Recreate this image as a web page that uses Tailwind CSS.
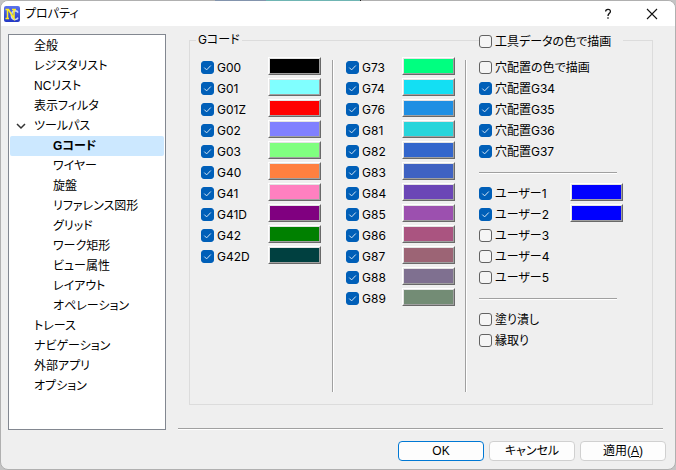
<!DOCTYPE html>
<html lang="ja">
<head>
<meta charset="utf-8">
<meta name="viewport" content="width=device-width, initial-scale=1">
<title>プロパティ</title>
<script src="https://cdn.jsdelivr.net/npm/@tailwindcss/browser@4"></script>
</head>
<body class="bg-[#c4c4c4] font-['Liberation_Sans','Noto_Sans_CJK_JP',sans-serif] text-[12px] leading-[20px] text-black [font-feature-settings:'palt']">
<div class="relative flex min-h-screen flex-col overflow-hidden rounded-lg border border-[#b0b0b0] bg-[#efefef]">
  <header class="flex h-[25px] shrink-0 items-center bg-white pl-[3px] pr-[11px]">
    <svg class="size-4 shrink-0" viewBox="0 0 16 16" aria-hidden="true">
      <defs><linearGradient id="logo" x1="0" y1="0" x2="0" y2="1"><stop offset="0" stop-color="#5b74ee"/><stop offset="1" stop-color="#2338c4"/></linearGradient></defs>
      <rect width="16" height="16" rx="2" fill="url(#logo)"/>
      <path d="M14 6.600C13 4 7.800 4 7.400 9c-.3 5.200 5.400 5.600 6.600 2.600" fill="none" stroke="#c4d0f7" stroke-width="1.600"/>
      <path d="M1.500 12.500h3.500M3.500 12.500V3.500M1.500 3.500h3l5.500 9V3.500M8 3.500h4" fill="none" stroke="#ffee20" stroke-width="1.500"/>
    </svg>
    <h1 class="ml-[5px] grow">プロパティ</h1>
    <button aria-label="ヘルプ" class="grid w-6 place-items-center"><svg class="h-3 w-2" viewBox="0 0 8 12" fill="none" stroke="#111" stroke-width="1.300" aria-hidden="true"><path d="M1.600 3.600C1.600.6 6.400.6 6.400 3.400 6.400 5.200 4 5.500 4 8"/><path d="M4 9.300v1.500"/></svg></button>
    <button aria-label="閉じる" class="ml-5 grid w-6 place-items-center"><svg class="size-3" viewBox="0 0 12 12" fill="none" stroke="#111" stroke-width="1.100" aria-hidden="true"><path d="M1 1l10 10M11 1L1 11"/></svg></button>
  </header>

  <main class="flex grow gap-3 pl-[7px] pr-[9px] pt-2">
    <nav aria-label="設定項目" class="w-[158px] shrink-0 self-stretch border border-[#828790] bg-white p-px">
      <ul id="tree"></ul>
    </nav>
    <div class="flex min-w-0 grow flex-col">
      <fieldset class="relative -mt-px mb-[23px] ml-[11px] mr-[13px] flex grow flex-col border border-[#dcdcdc] pb-3 pl-[11px] pr-[29px] pt-[10px] font-['Inter','Noto_Sans_CJK_JP',sans-serif]">
        <legend class="-ml-[5px] px-[2px] leading-[14px]">Gコード</legend>
        <div class="flex grow">
          <div id="col1" class="min-w-0 flex-[120]"></div>
          <div class="ml-[11px] mr-3 mt-[3px] w-[2px] border-l border-r border-l-[#a0a0a0] border-r-white"></div>
          <div id="col2" class="min-w-0 flex-[109]"></div>
          <div class="ml-[10px] mr-3 mt-[3px] w-[2px] border-l border-r border-l-[#a0a0a0] border-r-white"></div>
          <div id="col3" class="relative min-w-0 flex-[144]"></div>
        </div>
      </fieldset>
      <hr class="mr-[3px] h-[2px] border-b border-t border-b-white border-t-[#a0a0a0]">
    </div>
  </main>

  <footer class="flex justify-end gap-[5px] px-[9px] pb-2 pt-[11px] leading-[18px]">
    <button class="h-5 w-[86px] rounded border border-[#0078d4] bg-[#fdfdfd]">OK</button>
    <button class="h-5 w-[86px] rounded border border-[#d0d0d0] bg-[#fdfdfd]">キャンセル</button>
    <button class="h-5 w-[86px] rounded border border-[#d0d0d0] bg-[#fdfdfd]">適用(<u>A</u>)</button>
  </footer>
</div>
<div class="pointer-events-none absolute left-[215px] top-0 flex h-px w-[146px]" aria-hidden="true">
  <div class="w-[51px] bg-[#8394ad]"></div><div class="grow bg-[#6fb5b3]"></div><div class="w-px bg-[#222]"></div>
</div>

<script>
const tree = [
  ['全般'], ['レジスタリスト'], ['NCリスト'], ['表示フィルタ'],
  ['ツールパス', ['Gコード', 'ワイヤー', '旋盤', 'リファレンス図形', 'グリッド', 'ワーク矩形', 'ビュー属性', 'レイアウト', 'オペレーション']],
  ['トレース'], ['ナビゲーション'], ['外部アプリ'], ['オプション']
];
const chevron = '<svg class="ml-[6px] mr-[8px] h-2 w-[10px]" viewBox="0 0 10 8" fill="none" stroke="#333" stroke-width="1.500" aria-hidden="true"><path d="M1 2l4 4 4-4"/></svg>';
document.getElementById('tree').innerHTML = tree.map(([name, kids]) => kids
  ? `<li><button class="flex h-5 w-full items-center text-left" aria-expanded="true">${chevron}${name}</button><ul>${kids.map((k, i) =>
      `<li><button class="${i ? 'block h-5 w-full pl-[43px] text-left' : 'block h-5 w-full rounded-xs bg-[#cce8ff] pl-[43px] text-left font-bold'}">${k}</button></li>`).join('')}</ul></li>`
  : `<li><button class="block h-5 w-full pl-6 text-left">${name}</button></li>`).join('');

const row = ([name, checked, color]) => `
  <div class="flex h-[21px] items-start">
    <label class="flex h-[21px] grow items-center gap-[3px] whitespace-nowrap">
      <span class="grid size-[13px] shrink-0">
        <input type="checkbox" class="peer col-start-1 row-start-1 size-[13px] appearance-none rounded-[3px] border border-[#626262] bg-[#f5f5f5] checked:border-[#005fb8] checked:bg-[#005fb8]"${checked ? ' checked' : ''}>
        <svg class="pointer-events-none col-start-1 row-start-1 hidden size-[13px] peer-checked:block" viewBox="0 0 13 13" fill="none" stroke="#d5e6f5" aria-hidden="true"><path d="M3.300 6.600l2.300 2.300 4.200-4.400"/></svg>
      </span>${name}</label>
    ${color ? `<button aria-label="${name}の色" class="h-[18px] w-[53px] shrink-0 border border-b-[#696969] border-l-white border-r-[#696969] border-t-white"><span class="block h-4 border border-b-[#a0a0a0] border-l-[#e3e3e3] border-r-[#a0a0a0] border-t-[#e3e3e3]" style="background-color:${color}"></span></button>` : ''}
  </div>`;
const rule = '<div class="flex h-[21px] items-center"><hr class="mr-[6px] h-[2px] grow border-b border-t border-b-white border-t-[#a0a0a0]"></div>';
const fill = (id, items, before = '') => {
  document.getElementById(id).innerHTML = before + items.map(i => i ? row(i) : rule).join('');
};
fill('col1', [['G00',1,'#000000'],['G01',1,'#80ffff'],['G01Z',1,'#ff0000'],['G02',1,'#8080ff'],['G03',1,'#80ff80'],['G40',1,'#ff8040'],['G41',1,'#ff80c0'],['G41D',1,'#800080'],['G42',1,'#008000'],['G42D',1,'#004040']]);
fill('col2', [['G73',1,'#00ff80'],['G74',1,'#13dff3'],['G76',1,'#1f8fe3'],['G81',1,'#28d5db'],['G82',1,'#3366cc'],['G83',1,'#3f62c2'],['G84',1,'#6b46b6'],['G85',1,'#9c50af'],['G86',1,'#aa5480'],['G87',1,'#9c6475'],['G88',1,'#7f7090'],['G89',1,'#738c75']]);
fill('col3', [['穴配置の色で描画',0],['穴配置G34',1],['穴配置G35',1],['穴配置G36',1],['穴配置G37',1],null,['ユーザー1',1,'#0000ff'],['ユーザー2',1,'#0000ff'],['ユーザー3',0],['ユーザー4',0],['ユーザー5',0],null,['塗り潰し',0],['縁取り',0]],
  `<div class="absolute inset-x-0 -top-[26px] bg-[#efefef]">${row(['工具データの色で描画', 0])}</div>`);
</script>
</body>
</html>
